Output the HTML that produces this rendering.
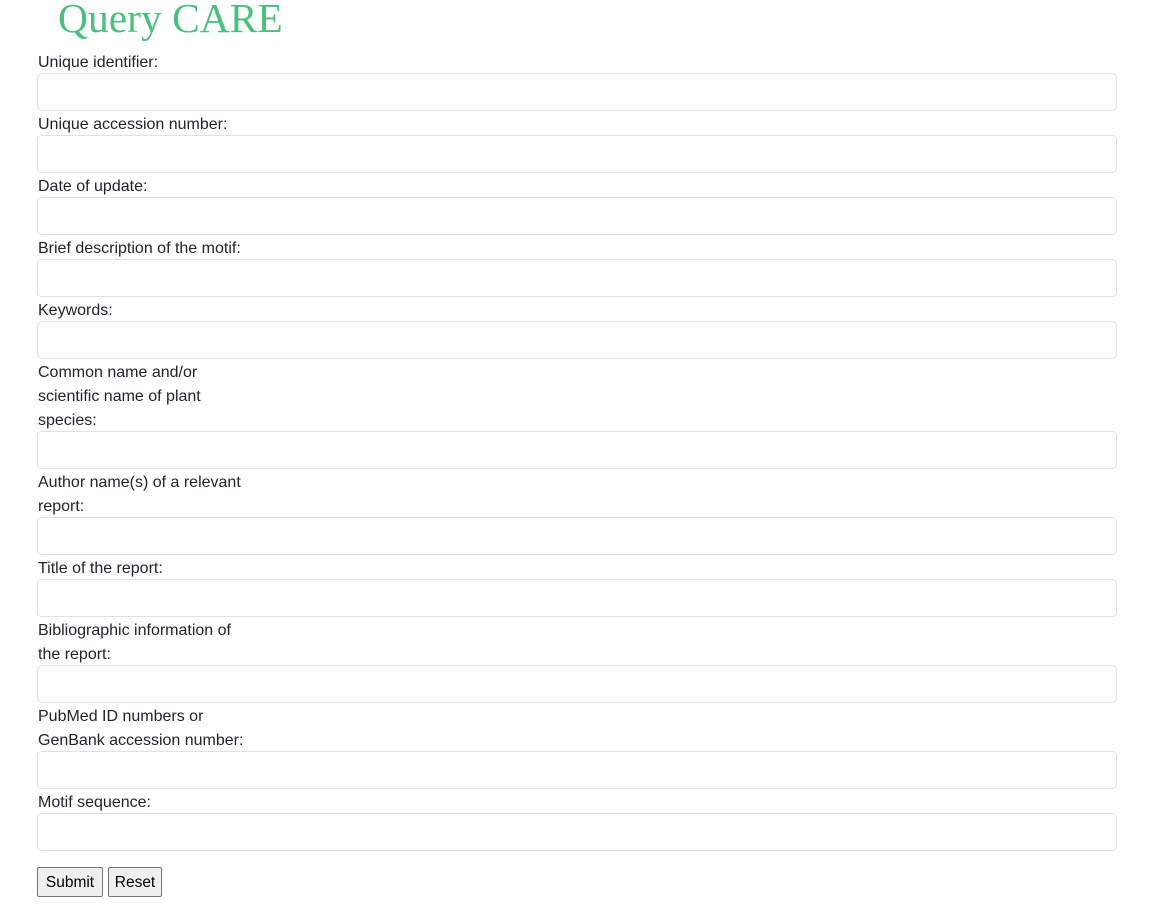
<!DOCTYPE html>
<html><head><meta charset="utf-8"><style>
html,body{margin:0;padding:0;background:#fff;width:1155px;height:907px;overflow:hidden}
body{font-family:"Liberation Sans",sans-serif;color:#212529}
h1{position:absolute;left:58px;top:-7px;margin:0;font-family:"Liberation Serif",serif;font-weight:normal;font-size:41.5px;color:#4cbf7f;line-height:50px}
.f{position:absolute;left:37px;top:49px;width:1080px}
.l{display:block;font-size:16px;line-height:24px;height:auto;padding-left:1px;color:#212529;position:relative;top:2px}
.i{display:block;box-sizing:border-box;width:1080px;height:38px;border:1px solid #dee2e6;border-radius:5px;background:#fff}
.b{position:absolute;top:867px;height:30px;box-sizing:border-box;border:1px solid #767676;border-radius:2px;background:#efefef;font-family:"Liberation Sans",sans-serif;font-size:15.5px;line-height:30px;text-align:center;color:#000}
</style></head><body>
<h1>Query CARE</h1>
<div class="f">
<span class="l">Unique identifier:</span><div class="i"></div>
<span class="l">Unique accession number:</span><div class="i"></div>
<span class="l">Date of update:</span><div class="i"></div>
<span class="l">Brief description of the motif:</span><div class="i"></div>
<span class="l">Keywords:</span><div class="i"></div>
<span class="l">Common name and/or<br>scientific name of plant<br>species:</span><div class="i"></div>
<span class="l">Author name(s) of a relevant<br>report:</span><div class="i"></div>
<span class="l">Title of the report:</span><div class="i"></div>
<span class="l">Bibliographic information of<br>the report:</span><div class="i"></div>
<span class="l">PubMed ID numbers or<br>GenBank accession number:</span><div class="i"></div>
<span class="l">Motif sequence:</span><div class="i"></div>
</div>
<div class="b" style="left:37px;width:66px">Submit</div>
<div class="b" style="left:108px;width:54px">Reset</div>
</body></html>
